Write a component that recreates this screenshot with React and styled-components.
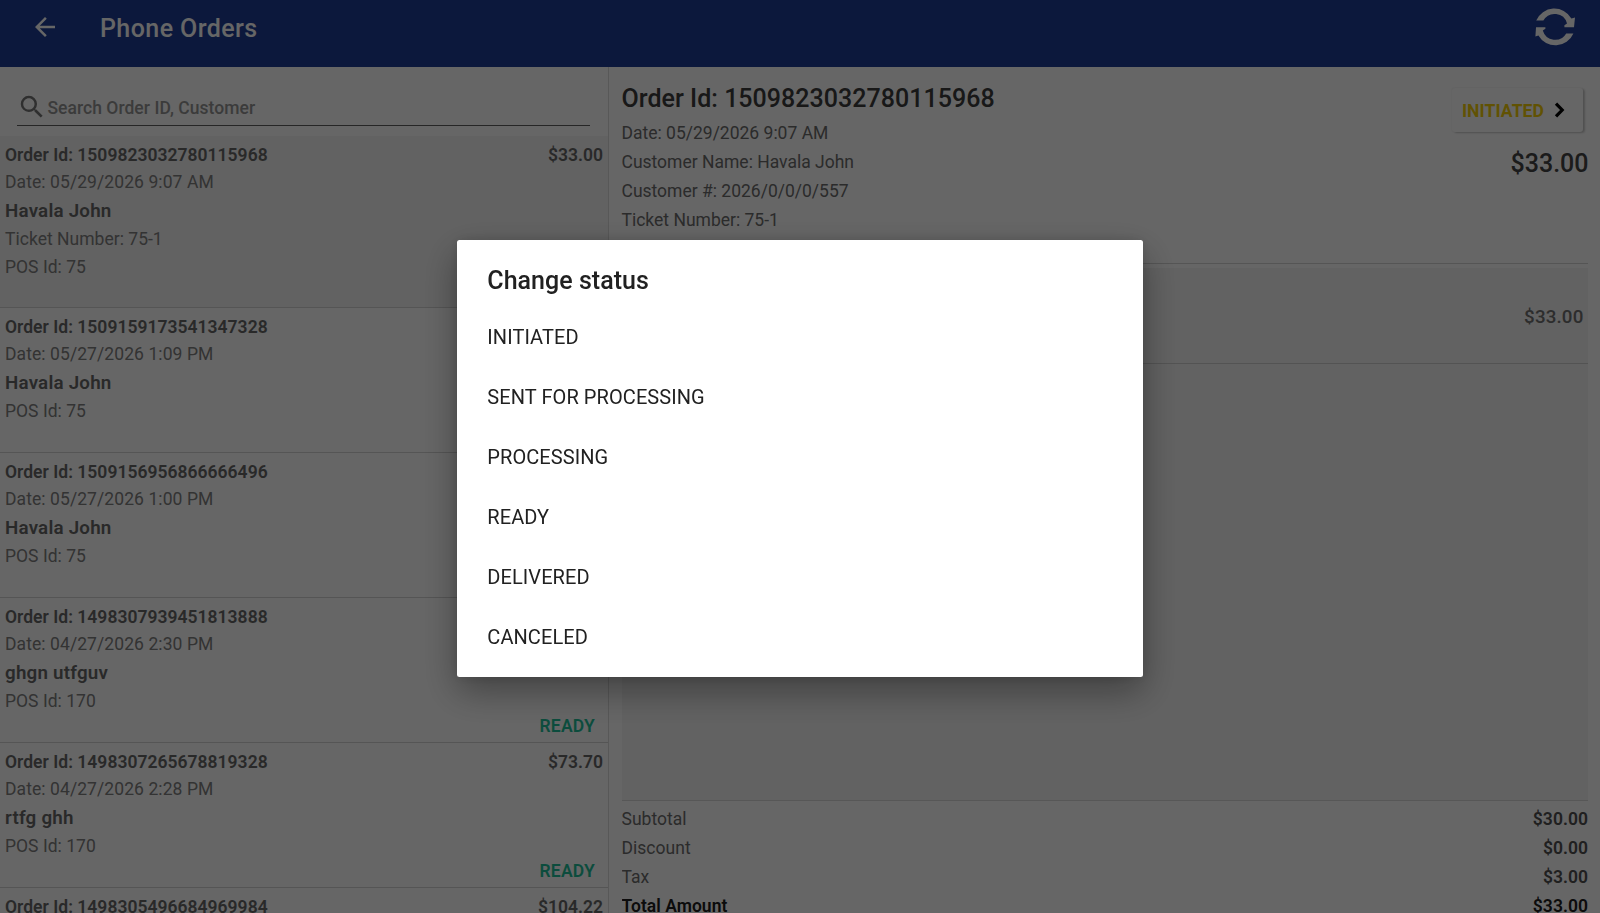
import React from "react";
import styled, { createGlobalStyle } from "styled-components";
import { MdArrowBack, MdSearch } from "react-icons/md";

const orders = [
  {
    id: "1509823032780115968",
    date: "05/29/2026 9:07 AM",
    customer: "Havala John",
    ticket: "75-1",
    pos: 75,
    total: "$33.00",
    selected: true,
  },
  {
    id: "1509159173541347328",
    date: "05/27/2026 1:09 PM",
    customer: "Havala John",
    pos: 75,
  },
  {
    id: "1509156956866666496",
    date: "05/27/2026 1:00 PM",
    customer: "Havala John",
    pos: 75,
  },
  {
    id: "1498307939451813888",
    date: "04/27/2026 2:30 PM",
    customer: "ghgn utfguv",
    pos: 170,
    status: "READY",
  },
  {
    id: "1498307265678819328",
    date: "04/27/2026 2:28 PM",
    customer: "rtfg ghh",
    pos: 170,
    total: "$73.70",
    status: "READY",
  },
  {
    id: "1498305496684969984",
    total: "$104.22",
  },
];

const totals = [
  { label: "Subtotal", value: "$30.00" },
  { label: "Discount", value: "$0.00" },
  { label: "Tax", value: "$3.00" },
  { label: "Total Amount", value: "$33.00", strong: true },
];

const statuses = [
  "INITIATED",
  "SENT FOR PROCESSING",
  "PROCESSING",
  "READY",
  "DELIVERED",
  "CANCELED",
];

function RefreshIcon() {
  return (
    <svg width="40" height="40" viewBox="0 0 40 40" fill="currentColor">
      <path d="M1.2 13.6A19.6 19.6 0 0 1 36.4 11.6L40 10.6 39 20.2H29.4V18.2L32 16.4A12.8 12.8 0 0 0 8.4 13.6Z" />
      <path d="M38.4 26.4A19.6 19.6 0 0 1 3.4 28.4L0.4 29.4 1 20.2H10.4V21.8L7.8 23.6A12.8 12.8 0 0 0 31.2 26.4Z" />
    </svg>
  );
}

function ChevronIcon() {
  return (
    <svg width="11" height="16" viewBox="0 0 11 16" fill="none">
      <path d="M2 1.6L8.2 8L2 14.4" stroke="currentColor" strokeWidth="3.2" />
    </svg>
  );
}

function OrderRow({ order }) {
  return (
    <Row $selected={order.selected}>
      <RowInfo>
        <OrderId>Order Id: {order.id}</OrderId>
        {order.date && <Meta>Date: {order.date}</Meta>}
        {order.customer && <Customer>{order.customer}</Customer>}
        {order.ticket && <SmallMeta>Ticket Number: {order.ticket}</SmallMeta>}
        {order.pos && <SmallMeta>POS Id: {order.pos}</SmallMeta>}
      </RowInfo>
      <RowSide>
        <OrderId>{order.total}</OrderId>
        {order.status && <Status>{order.status}</Status>}
      </RowSide>
    </Row>
  );
}

function App() {
  return (
    <>
      <GlobalStyle />
      <Page>
        <AppBar>
          <MdArrowBack size={30} />
          <h1>Phone Orders</h1>
          <RefreshIcon />
        </AppBar>
        <Content>
          <OrdersPane>
            <SearchBox>
              <MdSearch size={30} />
              <span>Search Order ID, Customer</span>
            </SearchBox>
            {orders.map((order) => (
              <OrderRow key={order.id} order={order} />
            ))}
          </OrdersPane>
          <DetailsPane>
            <DetailsHeader>
              <div>
                <h2>Order Id: 1509823032780115968</h2>
                <p>Date: 05/29/2026 9:07 AM</p>
                <p>Customer Name: Havala John</p>
                <p>Customer #: 2026/0/0/0/557</p>
                <p>Ticket Number: 75-1</p>
              </div>
              <DetailsSide>
                <StatusButton type="button">
                  <span>INITIATED</span>
                  <ChevronIcon />
                </StatusButton>
                <Price>$33.00</Price>
              </DetailsSide>
            </DetailsHeader>
            <Items>
              <Item>$33.00</Item>
            </Items>
            <Totals>
              {totals.map(({ label, value, strong }) => (
                <TotalRow key={label} $strong={strong}>
                  <span>{label}</span>
                  <b>{value}</b>
                </TotalRow>
              ))}
            </Totals>
          </DetailsPane>
        </Content>
      </Page>
      <Overlay>
        <Dialog role="dialog">
          <h2>Change status</h2>
          {statuses.map((status) => (
            <Option key={status}>{status}</Option>
          ))}
        </Dialog>
      </Overlay>
    </>
  );
}

const GlobalStyle = createGlobalStyle`
  * {
    box-sizing: border-box;
    margin: 0;
    padding: 0;
  }
  body {
    overflow: hidden;
    font-family: Roboto, sans-serif;
    font-size: 17.5px;
    background: #fff;
  }
`;

const Page = styled.div`
  display: flex;
  flex-direction: column;
  height: 100vh;
  overflow: hidden;
`;

const AppBar = styled.header`
  display: flex;
  align-items: center;
  flex-shrink: 0;
  height: 67px;
  padding: 0 25px 13px 30px;
  background: #1e3c96;
  color: #fff;
  h1 {
    flex: 1;
    margin-left: 40px;
    padding-top: 2px;
    font-size: 25px;
    font-weight: 500;
    letter-spacing: 0.42px;
  }
`;

const Content = styled.main`
  display: flex;
  flex: 1;
  min-height: 0;
`;

const OrdersPane = styled.section`
  flex-shrink: 0;
  width: 609px;
  border-right: 1px solid #dcdcdc;
  overflow: hidden;
`;

const SearchBox = styled.div`
  display: flex;
  align-items: center;
  height: 59px;
  margin: 0 18px 9.6px 17.4px;
  padding-top: 21px;
  border-bottom: 1.5px solid #606060;
  color: #959595;
  font-weight: 500;
  letter-spacing: 0.04px;
  svg {
    color: #757575;
  }
  span {
    padding-top: 3px;
  }
`;

const Row = styled.article`
  display: flex;
  justify-content: space-between;
  height: ${({ $selected }) => ($selected ? "172px" : "145.1px")};
  padding: 5px 5px 6.2px 5px;
  border-bottom: 1px solid #d4d4d4;
  background: ${({ $selected }) => ($selected ? "#f4f4f4" : "transparent")};
`;

const RowInfo = styled.div`
  display: flex;
  flex-direction: column;
`;

const RowSide = styled.div`
  display: flex;
  flex-direction: column;
  align-items: flex-end;
  justify-content: space-between;
`;

const OrderId = styled.div`
  min-height: 28px;
  line-height: 28px;
  font-weight: 600;
  letter-spacing: 0.02px;
  color: #686868;
`;

const Meta = styled.div`
  margin-bottom: 1px;
  line-height: 27px;
  letter-spacing: 0.08px;
  color: #808080;
`;

const SmallMeta = styled.div`
  line-height: 27.8px;
  letter-spacing: 0.02px;
  color: #808080;
`;

const Customer = styled.div`
  margin-bottom: 1px;
  line-height: 28.5px;
  font-size: 18.75px;
  font-weight: 600;
  letter-spacing: 0.22px;
  color: #686868;
`;

const Status = styled.div`
  padding-right: 8px;
  line-height: 20px;
  font-weight: 600;
  letter-spacing: 0.2px;
  color: #1fbf9a;
`;

const DetailsPane = styled.section`
  display: flex;
  flex: 1;
  flex-direction: column;
  padding: 0 12px 0 12.5px;
`;

const DetailsHeader = styled.div`
  display: flex;
  justify-content: space-between;
  flex-shrink: 0;
  height: 197px;
  padding-top: 15px;
  border-bottom: 1px solid #d4d4d4;
  h2 {
    margin-bottom: 3px;
    line-height: 34px;
    font-size: 25px;
    font-weight: 500;
    letter-spacing: 0.03px;
    color: #3c3c3c;
  }
  p {
    line-height: 29.1px;
    color: #6c6c6c;
  }
`;

const DetailsSide = styled.div`
  display: flex;
  flex-direction: column;
  align-items: flex-end;
  padding-top: 6px;
`;

const StatusButton = styled.button`
  display: flex;
  align-items: center;
  gap: 9.5px;
  height: 44px;
  margin-right: 5px;
  padding: 0 18.5px 1px 10px;
  border: 0;
  border-radius: 3px;
  background: #fff;
  box-shadow: 2px 1px 2px rgba(0, 0, 0, 0.2), 0 0 2px rgba(0, 0, 0, 0.1);
  font-family: inherit;
  font-size: 17.5px;
  font-weight: 700;
  letter-spacing: 0.1px;
  color: #f2cc08;
  span {
    padding-top: 2px;
  }
  svg {
    color: #000;
  }
`;

const Price = styled.div`
  margin-top: 14.7px;
  margin-right: -0.5px;
  line-height: 34px;
  font-size: 25px;
  font-weight: 500;
  color: #444;
`;

const Items = styled.div`
  flex: 1;
  margin-top: 3.5px;
  border-bottom: 1px solid #dadada;
  background: #f4f4f4;
`;

const Item = styled.div`
  height: 96.5px;
  padding-right: 4.5px;
  border-bottom: 1px solid #d0d0d0;
  line-height: 98.6px;
  text-align: right;
  font-size: 18.75px;
  font-weight: 500;
  letter-spacing: 0.15px;
  color: #707070;
`;

const Totals = styled.div`
  flex-shrink: 0;
  height: 112.5px;
  padding-top: 4.6px;
  overflow: hidden;
`;

const TotalRow = styled.div`
  display: flex;
  justify-content: space-between;
  line-height: 29.1px;
  font-weight: ${({ $strong }) => ($strong ? 600 : 400)};
  letter-spacing: 0.03px;
  color: ${({ $strong }) => ($strong ? "#202020" : "#6c6c6c")};
  b {
    font-weight: 600;
    color: ${({ $strong }) => ($strong ? "#202020" : "#505050")};
  }
`;

const Overlay = styled.div`
  position: fixed;
  inset: 0;
  display: flex;
  align-items: center;
  justify-content: center;
  padding-top: 4px;
  background: rgba(0, 0, 0, 0.6);
`;

const Dialog = styled.div`
  width: 685.4px;
  height: 437px;
  padding: 23.9px 30px 0;
  border-radius: 2.5px;
  background: #fff;
  box-shadow: 0 14px 36px rgba(0, 0, 0, 0.36), 0 0 12px rgba(0, 0, 0, 0.12);
  color: #212121;
  h2 {
    margin-bottom: 9px;
    line-height: 34px;
    font-size: 25px;
    font-weight: 500;
    letter-spacing: 0.03px;
  }
`;

const Option = styled.div`
  line-height: 60px;
  font-size: 20px;
  letter-spacing: 0.08px;
`;

export default App;
